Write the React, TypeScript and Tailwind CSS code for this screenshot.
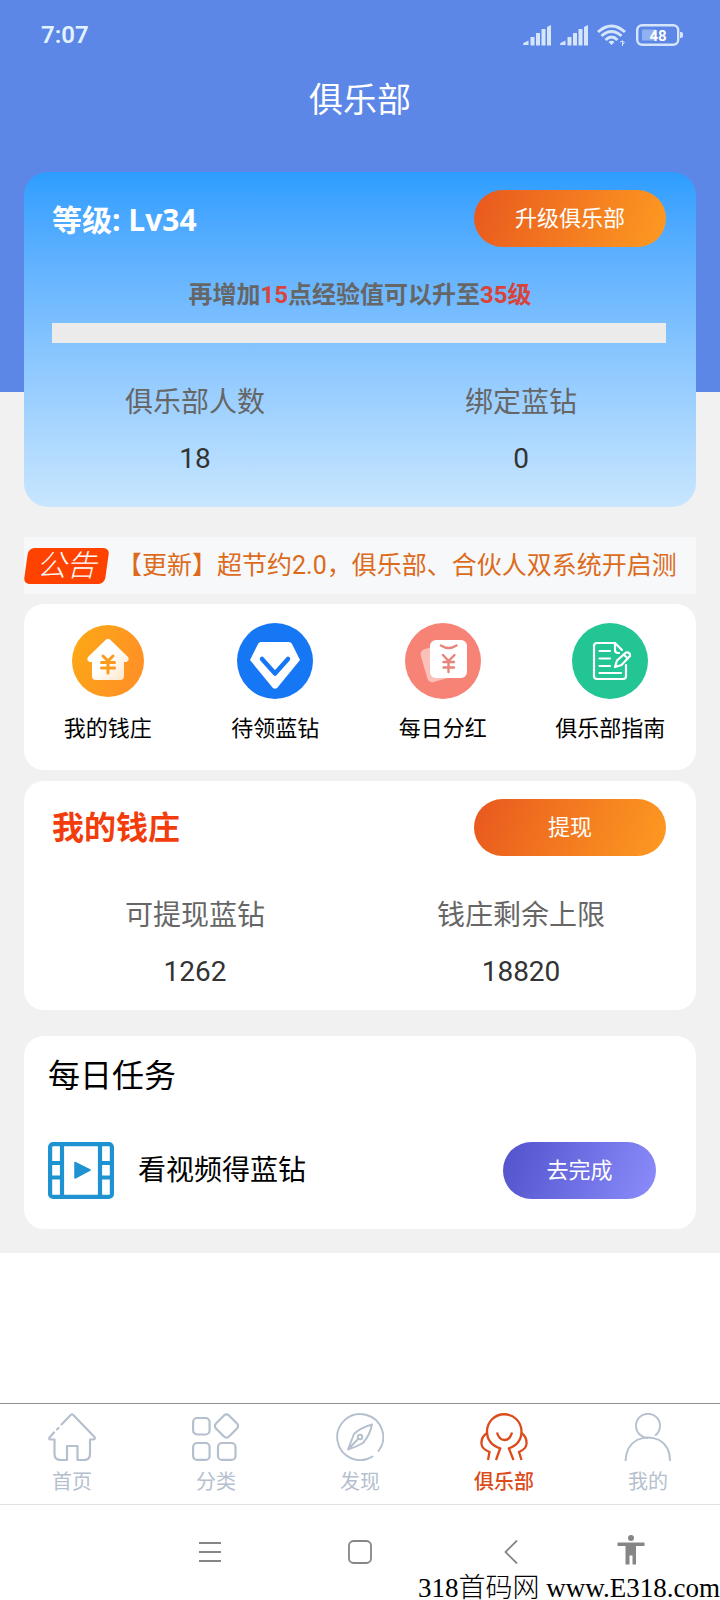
import type { ReactNode } from 'react';

const SignalIcon = () => (
  <svg width="28" height="21" viewBox="0 0 28 21" fill="#d5e5fb" aria-hidden="true">
    <path d="M0 20 L0.500 18 L5.500 15.500 V20 Z" />
    <rect x="7.500" y="12" width="4" height="8.500" rx="0.5" />
    <rect x="13" y="8" width="4" height="12.500" rx="0.5" />
    <rect x="18.500" y="4" width="4" height="16.500" rx="0.5" />
    <path d="M24 2 L28 0 V20.500 H24 Z" />
  </svg>
);

const WifiIcon = () => (
  <svg width="30" height="23" viewBox="0 0 30 23" fill="none" stroke="#d5e5fb" aria-hidden="true">
    <g strokeWidth="3">
      <path d="M1 8 Q14.500 -4 28 8" />
      <path d="M4.500 12 Q14.500 3 24.500 12" />
      <path d="M8.500 16 Q14.500 10 20.500 16" />
    </g>
    <path d="M11.500 18 Q14.500 15.500 17.500 18 L14.500 21 Z" fill="#d5e5fb" stroke="none" />
    <path d="M23 18 l2.500 -1 v5 M25.500 17 l2 1.500 l-2 2" strokeWidth="1" />
  </svg>
);

const BatteryIcon = () => (
  <svg width="47" height="22" viewBox="0 0 47 22" fill="none" aria-label="电量 48%">
    <rect x="1.200" y="1.200" width="41" height="19.600" rx="5" stroke="#d5e5fb" strokeWidth="2.400" />
    <rect x="6" y="5.500" width="14" height="11" rx="1" fill="#8fb0f2" />
    <path d="M44 8 h1 a2 2 0 0 1 2 2 v2 a2 2 0 0 1 -2 2 h-1 Z" fill="#d5e5fb" />
    <text x="22" y="16.500" textAnchor="middle" fontSize="15" fontWeight="700" fill="#fff" fontFamily="Roboto, sans-serif">
      48
    </text>
  </svg>
);

const BankIcon = () => (
  <svg width="76" height="76" viewBox="0 0 76 76" aria-hidden="true">
    <defs>
      <linearGradient id="bank" x1="0" x2="1" y1="0" y2="0.4">
        <stop offset="0" stopColor="#fcaa14" />
        <stop offset="1" stopColor="#ff9125" />
      </linearGradient>
      <linearGradient id="house" x1="0" x2="1" y1="0" y2="1">
        <stop offset="0.5" stopColor="#fff" />
        <stop offset="1" stopColor="#ffe3c2" />
      </linearGradient>
    </defs>
    <circle cx="38" cy="38" r="36" fill="url(#bank)" />
    <path
      d="M36 16.500 Q38 14.800 40 16.500 L58 34 Q60 38 56 39 H54 V53 Q54 57 50 57 H26 Q22 57 22 53 V39 H20 Q16 38 18 34 Z"
      fill="url(#house)"
    />
    <path d="M33 33 L38 38 L43 33 M31.500 39.500 H44.500 M31.500 45 H44.500 M38 38 V50" stroke="#fb9a1c" strokeWidth="3" strokeLinecap="round" fill="none" />
  </svg>
);

const DiamondIcon = () => (
  <svg width="76" height="76" viewBox="0 0 76 76" aria-hidden="true">
    <circle cx="38" cy="38" r="38" fill="#1677f5" />
    <path d="M24 19 H52 Q54 19 55 21 L63 37 L40.500 64.500 Q38 67 35.500 64.500 L13 37 L21 21 Q22 19 24 19 Z" fill="#fff" />
    <path d="M25 36 L38 50.500 L51 36" stroke="#1677f5" strokeWidth="4.500" strokeLinecap="round" strokeLinejoin="round" fill="none" />
  </svg>
);

const DividendIcon = () => (
  <svg width="76" height="76" viewBox="0 0 76 76" aria-hidden="true">
    <circle cx="38" cy="38" r="38" fill="#f78376" />
    <rect x="18.500" y="23" width="30" height="34" rx="5" transform="rotate(-16 33 40)" fill="#fbc0b9" />
    <rect x="25" y="17" width="37" height="38" rx="6" fill="#fff" />
    <path d="M36 22.500 Q43.500 27.500 51.500 22.500" stroke="#e8857b" strokeWidth="2.400" fill="none" strokeLinecap="round" />
    <path d="M38 32 L43.500 38 L49.500 32 M38.500 39 H49 M38.500 44.500 H49 M43.500 38 V49" stroke="#e8857b" strokeWidth="2.400" fill="none" strokeLinecap="round" />
  </svg>
);

const GuideIcon = () => (
  <svg width="76" height="76" viewBox="0 0 76 76" fill="none" stroke="#fff" strokeWidth="2.200" strokeLinecap="round" strokeLinejoin="round" aria-hidden="true">
    <circle cx="38" cy="38" r="38" fill="#23c594" stroke="none" />
    <path d="M50 27 L43 20 H25 Q22 20 22 23 V53 Q22 56 25 56 H51 Q54 56 54 53 V42" />
    <path d="M43 20 V27 Q43 30 46 30 H47" />
    <path d="M27.500 28 H38 M27.500 35.500 H38 M27.500 43 H38 M27.500 50 H49" />
    <path d="M43 44 L45 37.500 L54 29.500 Q58.500 29 58 33 L49.500 42 Z M51.500 31.500 L56 35.500" />
  </svg>
);

const VideoIcon = () => (
  <svg width="66" height="57" viewBox="0 0 66 57" fill="none" stroke="#1f93d2" strokeWidth="4.200" aria-hidden="true">
    <rect x="2.100" y="2.100" width="61.800" height="52.800" rx="3" />
    <path d="M14 2 V55 M52 2 V55 M2 21 H14 M2 35.500 H14 M52 21 H64 M52 35.500 H64" />
    <path d="M27 20.500 L42 28 L27 36 Z" fill="#1f93d2" strokeWidth="1.500" strokeLinejoin="round" />
  </svg>
);

const tabSvg = {
  width: 48,
  height: 48,
  viewBox: '0 0 48 48',
  fill: 'none',
  stroke: 'currentColor',
  strokeWidth: 2.2,
  'aria-hidden': true,
} as const;

const HomeIcon = () => (
  <svg {...tabSvg} strokeLinejoin="round" strokeLinecap="round">
    <path d="M13.500 11.500 L23 1.800 Q24 1 25 1.800 L46.500 24 Q47.500 26.500 45 26.500 H42 V41 Q42 47 36 47 H29.500 V33 H19 V47 H13 Q6.500 47 6.500 41 V26.500 H3 Q0.500 26.500 1.500 24.500 L6 19.500" />
    <path d="M9 16.500 L10.500 15" />
  </svg>
);

const CategoryIcon = () => (
  <svg {...tabSvg}>
    <rect x="1.100" y="5" width="16.500" height="16.500" rx="4" />
    <rect x="1.100" y="30" width="16.500" height="16.900" rx="4" />
    <rect x="26" y="30" width="17.500" height="16.900" rx="4" />
    <rect x="25.300" y="3.800" width="18.400" height="18.400" rx="3.500" transform="rotate(45 34.500 13)" />
  </svg>
);

const DiscoverIcon = () => (
  <svg {...tabSvg} strokeWidth={1.9} strokeLinecap="round" strokeLinejoin="round">
    <path d="M42.500 38 A23 23 0 1 0 36.500 43.500" />
    <path d="M12 36.500 L18 21 Q24 15 36 11.500 Q34 22 27 30 Q20 34 12 36.500 Z M12 36.500 L22 26" />
    <circle cx="24" cy="24" r="2.300" />
  </svg>
);

const ClubIcon = () => (
  <svg {...tabSvg} strokeWidth={2.3}>
    <path d="M20.500 35.500 Q7 31 7 18.500 A17.200 17.200 0 0 1 41.500 18.500 Q41.500 31 28.500 35.500" />
    <path d="M17 19.500 Q19 27 24.500 27 Q30 27 32 19.500" />
    <path d="M7 20 Q1 24 1.500 31 Q2 36 9.500 39 L8 47 M20.500 34.500 L16 47" />
    <path d="M41.500 20 Q47 24 46.500 31 Q46 36 39 39 L41.500 47 M28.500 34.500 L33.500 47" />
  </svg>
);

const MineIcon = () => (
  <svg {...tabSvg} strokeWidth={1.9}>
    <path d="M31 22.500 A12 12 0 1 0 17 22.500 Q20 25 24 25" />
    <path d="M1.500 48 Q2 33 13 27 Q24 22 35 27 Q46 33 46 48" />
  </svg>
);

function PillButton({ children }: { children: ReactNode }) {
  return (
    <button type="button" className="h-[57px] w-48 rounded-full bg-linear-110 from-[#e8571e] to-[#fd9a21] text-[22px] leading-8 text-white">
      {children}
    </button>
  );
}

function Stats({ items }: { items: { label: string; value: string }[] }) {
  return (
    <dl className="grid grid-cols-2 pr-3 pl-2">
      {items.map((item) => (
        <div key={item.label} className="flex flex-col items-center gap-4 text-[28px] leading-10">
          <dt className="text-[#666]">{item.label}</dt>
          <dd className="text-[#333]">{item.value}</dd>
        </div>
      ))}
    </dl>
  );
}

const shortcuts = [
  { label: '我的钱庄', icon: <BankIcon /> },
  { label: '待领蓝钻', icon: <DiamondIcon /> },
  { label: '每日分红', icon: <DividendIcon /> },
  { label: '俱乐部指南', icon: <GuideIcon /> },
];

const tabs = [
  { label: '首页', icon: <HomeIcon />, active: false },
  { label: '分类', icon: <CategoryIcon />, active: false },
  { label: '发现', icon: <DiscoverIcon />, active: false },
  { label: '俱乐部', icon: <ClubIcon />, active: true },
  { label: '我的', icon: <MineIcon />, active: false },
];

export default function App() {
  return (
    <div className="flex min-h-screen flex-col bg-white font-[Roboto,'Noto_Sans_CJK_SC',sans-serif]">
      <div className="bg-[#f1f1f1] pb-6">
        <header className="bg-[#5c87e6] pb-[264px]">
          <div className="flex items-center justify-between pt-[19px] pr-[37px] pb-[25px] pl-[41px]">
            <span className="text-2xl leading-8 font-semibold text-[#e0f3ff]">7:07</span>
            <div className="flex items-center gap-[9px]">
              <SignalIcon />
              <SignalIcon />
              <WifiIcon />
              <BatteryIcon />
            </div>
          </div>
          <h1 className="h-[52px] text-center text-[34px] leading-12 text-white">俱乐部</h1>
        </header>

        <main className="-mt-[220px] px-6">
          <section className="rounded-3xl bg-linear-to-b from-[#2c9dff] to-[#c8e6ff] pt-[18px] pb-7">
            <div className="flex items-center justify-between pr-[30px] pl-7">
              <h2 className="pt-0.5 font-['Open_Sans','Noto_Sans_CJK_SC',sans-serif] text-3xl leading-10 font-bold text-white">等级: Lv34</h2>
              <PillButton>升级俱乐部</PillButton>
            </div>
            <p className="mt-8 text-center text-2xl leading-8 font-bold text-[#666]">
              再增加<span className="text-[#d9433a]">15</span>点经验值可以升至<span className="text-[#d9433a]">35级</span>
            </p>
            <div role="progressbar" aria-label="经验值" aria-valuenow={0} className="mt-3 mr-[30px] mb-10 ml-7 h-5 bg-[#ebebeb]" />
            <Stats items={[{ label: '俱乐部人数', value: '18' }, { label: '绑定蓝钻', value: '0' }]} />
          </section>

          <div className="mt-[30px] flex h-[57px] items-center overflow-hidden bg-[#f7f8fa]">
            <div className="relative h-9 w-[85px] shrink-0 text-center text-[30px] leading-9 font-light text-white italic">
              <span className="absolute inset-x-0.5 inset-y-0 -skew-x-8 rounded-md bg-[#ff4200]" />
              <span className="relative">公告</span>
            </div>
            <p className="ml-2 text-[25px] leading-9 whitespace-nowrap text-[#dc6b1c]">【更新】超节约2.0，俱乐部、合伙人双系统开启测</p>
          </div>

          <nav className="mt-2.5 grid grid-cols-4 rounded-[20px] bg-white pt-[19px] pr-0.5 pb-[25px]">
            {shortcuts.map((s) => (
              <a key={s.label} href="#" className="flex flex-col items-center gap-3.5 text-[22px] leading-8 text-black">
                {s.icon}
                {s.label}
              </a>
            ))}
          </nav>

          <section className="mt-[11px] rounded-[20px] bg-white pt-[18px] pb-[18px]">
            <div className="mb-10 flex items-center justify-between pr-[30px] pl-7">
              <h2 className="text-[32px] leading-12 font-bold text-[#f23c0c]">我的钱庄</h2>
              <PillButton>提现</PillButton>
            </div>
            <Stats items={[{ label: '可提现蓝钻', value: '1262' }, { label: '钱庄剩余上限', value: '18820' }]} />
          </section>

          <section className="mt-[26px] rounded-[20px] bg-white pt-4 pr-10 pb-[30px] pl-6">
            <h2 className="text-[32px] leading-12 text-black">每日任务</h2>
            <div className="mt-[42px] flex items-center">
              <VideoIcon />
              <span className="ml-6 flex-1 text-[28px] leading-10 text-black">看视频得蓝钻</span>
              <button type="button" className="h-[57px] w-[153px] rounded-full bg-linear-110 from-[#5252cb] to-[#8c8cfb] text-[22px] leading-8 text-white">
                去完成
              </button>
            </div>
          </section>
        </main>
      </div>

      <footer className="mt-auto">
        <nav className="grid h-[101px] grid-cols-5 border-t border-[#919191] pt-[9px]">
          {tabs.map((t) => (
            <a
              key={t.label}
              href="#"
              className={
                'flex flex-col items-center gap-[5px] text-xl leading-8 ' + (t.active ? 'font-medium text-[#dc4c1a]' : 'text-[#b5c0ce]')
              }
            >
              {t.icon}
              {t.label}
            </a>
          ))}
        </nav>
        <div className="relative grid h-24 grid-cols-[136fr_148fr_152fr_150fr_90fr_44fr] items-start border-t border-[#e2e2e2] pt-[29px] text-[#868686]">
          <span />
          <button type="button" aria-label="菜单" className="flex h-9 items-center justify-center">
            <svg width="22" height="22" viewBox="0 0 22 22" stroke="currentColor" strokeWidth="1.800">
              <path d="M0 2 H22 M0 11 H22 M0 20 H22" />
            </svg>
          </button>
          <button type="button" aria-label="主页" className="flex h-9 items-center justify-center">
            <svg width="24" height="24" viewBox="0 0 24 24" stroke="currentColor" strokeWidth="1.800" fill="none">
              <rect x="1" y="1" width="22" height="22" rx="4.500" />
            </svg>
          </button>
          <button type="button" aria-label="返回" className="flex h-9 items-center justify-center">
            <svg width="14" height="24" viewBox="0 0 14 24" stroke="currentColor" strokeWidth="1.800" fill="none">
              <path d="M13 0.500 L1.500 12 L13 23.500" />
            </svg>
          </button>
          <button type="button" aria-label="无障碍" className="flex h-8 items-center justify-center">
            <svg width="28" height="30" viewBox="0 0 28 30" fill="currentColor">
              <circle cx="14" cy="3" r="3" />
              <path d="M0.500 7.500 H27.500 V11 H19 V29.500 H15.500 V20.500 H12.500 V29.500 H8.500 V11 H0.500 Z" />
            </svg>
          </button>
          <span className="absolute right-0 bottom-0 font-['Liberation_Serif','Noto_Sans_CJK_SC',serif] text-[27px] leading-6 font-light whitespace-nowrap text-black">
            318首码网 www.E318.com
          </span>
        </div>
      </footer>
    </div>
  );
}
